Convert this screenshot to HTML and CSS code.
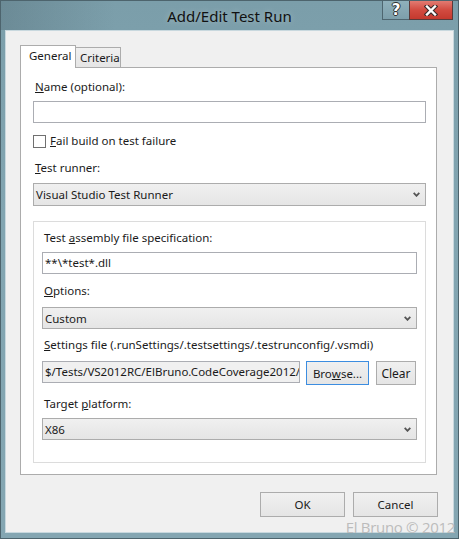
FILE: index.html
```html
<!DOCTYPE html>
<html>
<head>
<meta charset="utf-8">
<link rel="stylesheet" href="styles.css">
</head>
<body>
<div class="window">
  <div class="titlebar">
    <div class="title">Add/Edit Test Run</div>
    <div class="caps">
      <div class="cap help">?</div>
      <div class="cap close">
        <svg width="14" height="11" viewBox="0 0 14 11"><path d="M3 1.5 L11 9.5 M11 1.5 L3 9.5" stroke="#3a2a2a" stroke-width="4.5" stroke-linecap="square"/><path d="M3 1.5 L11 9.5 M11 1.5 L3 9.5" stroke="#ffffff" stroke-width="2.4" stroke-linecap="square"/></svg>
      </div>
    </div>
  </div>
  <div class="client">
    <div class="tabs">
      <div class="tab active">General</div>
      <div class="tab">Criteria</div>
    </div>
    <div class="panel">
      <div class="lbl first"><u>N</u>ame (optional):</div>
      <div class="input name"></div>
      <div class="check-row">
        <span class="checkbox"></span>
        <span class="check-text"><u>F</u>ail build on test failure</span>
      </div>
      <div class="lbl runner"><u>T</u>est runner:</div>
      <div class="select tall">
        <span>Visual Studio Test Runner</span>
        <svg class="chev" width="7" height="5" viewBox="0 0 7 5"><path d="M0.7 0.8 L3.5 3.8 L6.3 0.8" fill="none" stroke="#555" stroke-width="1.8"/></svg>
      </div>
      <div class="group">
        <div class="lbl g1">Test <u>a</u>ssembly file specification:</div>
        <div class="input val">**\*test*.dll</div>
        <div class="lbl g2"><u>O</u>ptions:</div>
        <div class="select">
          <span>Custom</span>
          <svg class="chev" width="7" height="5" viewBox="0 0 7 5"><path d="M0.7 0.8 L3.5 3.8 L6.3 0.8" fill="none" stroke="#555" stroke-width="1.8"/></svg>
        </div>
        <div class="lbl g3"><u>S</u>ettings file (.runSettings/.testsettings/.testrunconfig/.vsmdi)</div>
        <div class="file-row">
          <div class="input readonly">$/Tests/VS2012RC/ElBruno.CodeCoverage2012/</div>
          <div class="btn browse">Bro<u>w</u>se...</div>
          <div class="btn clear">Clear</div>
        </div>
        <div class="lbl g4">Target <u>p</u>latform:</div>
        <div class="select">
          <span>X86</span>
          <svg class="chev" width="7" height="5" viewBox="0 0 7 5"><path d="M0.7 0.8 L3.5 3.8 L6.3 0.8" fill="none" stroke="#555" stroke-width="1.8"/></svg>
        </div>
      </div>
    </div>
    <div class="footer">
      <div class="btn dlg">OK</div>
      <div class="btn dlg">Cancel</div>
    </div>
  </div>
  <div class="watermark">El Bruno © 2012</div>
</div>
</body>
</html>
```
FILE: styles.css
```css
html, body {
  margin: 0;
  padding: 0;
  background: #ffffff;
}
body {
  font-family: "Noto Sans", "Open Sans", sans-serif;
  font-size: 11.5px;
  color: #1a1a1a;
}
u { text-decoration: underline; text-underline-offset: 1px; }

.window {
  position: relative;
  width: 459px;
  height: 539px;
  box-sizing: border-box;
  border: 1px solid #4d646d;
  background: linear-gradient(180deg, #7b9eaa 0%, #82a5b1 40%, #84a6b2 100%);
  display: flex;
  flex-direction: column;
  overflow: hidden;
}
.titlebar {
  height: 29px;
  flex: none;
  display: flex;
  align-items: center;
  justify-content: center;
  background: linear-gradient(90deg, rgba(60,80,90,0.25) 0%, rgba(60,80,90,0) 25%);
}
.title {
  font-size: 15px;
  color: #111;
  line-height: 29px;
  padding-top: 1px;
  text-shadow: 0 0 6px rgba(255,255,255,0.35);
}
.caps {
  position: absolute;
  top: -1px;
  right: 5px;
  display: flex;
}
.cap {
  height: 20px;
  box-sizing: border-box;
  display: flex;
  align-items: center;
  justify-content: center;
}
.help {
  width: 27px;
  border: 1px solid #4e6670;
  border-right: none;
  background: linear-gradient(180deg, #8fb0bb, #7d9fab);
  color: #fff;
  font-weight: bold;
  font-size: 15px;
  font-family: "DejaVu Sans", sans-serif;
  text-shadow: 0 0 1px #222, 1px 0 0 #333, -1px 0 0 #333, 0 1px 0 #333, 0 -1px 0 #333;
}
.close {
  width: 44px;
  border: 1px solid #5a3a3a;
  background: linear-gradient(180deg, #e27b72 0%, #d24b40 50%, #c5392e 100%);
}

.client {
  flex: 1;
  margin: 0 4px 5px 4px;
  background: #f0f0f0;
  border: 1px solid #c8d8de;
  padding: 14px 16px 0 14px;
  display: flex;
  flex-direction: column;
}
.tabs {
  display: flex;
  align-items: flex-end;
  position: relative;
  z-index: 1;
  height: 23px;
}
.tab {
  box-sizing: border-box;
  border: 1px solid #acacac;
  border-bottom: none;
  padding: 0 0 0 4px;
  line-height: 18px;
}
.tab.active {
  height: 23px;
  width: 56px;
  background: #fff;
  padding-left: 8px;
  padding-top: 1px;
}
.tab:not(.active) {
  height: 20px;
  width: 45px;
  margin-bottom: 1px;
  border-left: none;
  background: linear-gradient(180deg, #f0f0f0, #e5e5e5);
  padding-left: 4px;
  padding-top: 1px;
}
.panel {
  margin-top: -1px;
  height: 408px;
  box-sizing: border-box;
  background: #fff;
  border: 1px solid #acacac;
  padding: 11px 10px 11px 12px;
  display: flex;
  flex-direction: column;
}
.lbl {
  line-height: 16px;
  height: 16px;
  padding-left: 2px;
  white-space: nowrap;
}
.input {
  box-sizing: border-box;
  height: 22px;
  border: 1px solid #abadb3;
  background: #fff;
  line-height: 20px;
  padding-left: 2px;
  white-space: nowrap;
  overflow: hidden;
}
.name { margin-top: 6px; }
.check-row {
  margin-top: 10px;
  height: 16px;
  display: flex;
  align-items: center;
}
.checkbox {
  width: 13px;
  height: 13px;
  box-sizing: border-box;
  border: 1px solid #707070;
  background: #fff;
}
.check-text {
  margin-left: 4px;
  line-height: 16px;
}
.runner { margin-top: 11px; }
.select {
  box-sizing: border-box;
  height: 22px;
  border: 1px solid #acacac;
  background: linear-gradient(180deg, #f0f0f0 0%, #e5e5e5 100%);
  display: flex;
  align-items: center;
  justify-content: space-between;
  padding: 0 5px 0 2px;
  margin-top: 6px;
}
.select.tall {
  height: 23px;
  margin-top: 7px;
}
.group {
  margin-top: 15px;
  height: 242px;
  box-sizing: border-box;
  border: 1px solid #dcdcdc;
  padding: 8px 8px 22px 8px;
  display: flex;
  flex-direction: column;
}
.val { margin-top: 6px; }
.g2 { margin-top: 9px; }
.group .select { margin-top: 8px; }
.g3 { margin-top: 8px; }
.g4 { margin-top: 11px; }
.group .g4 + .select { margin-top: 6px; }
.file-row {
  margin-top: 8px;
  display: flex;
  align-items: flex-start;
  height: 24px;
}
.readonly {
  width: 258px;
  background: #f0f0f0;
  flex: none;
}
.btn {
  box-sizing: border-box;
  border: 1px solid #acacac;
  background: linear-gradient(180deg, #f0f0f0 0%, #e5e5e5 100%);
  display: flex;
  align-items: center;
  justify-content: center;
}
.browse {
  margin-left: 6px;
  width: 63px;
  height: 24px;
  border-color: #3c8de0;
}
.clear {
  margin-left: 7px;
  width: 40px;
  height: 24px;
  font-size: 12px;
}
.footer {
  margin-top: 17px;
  margin-right: -1px;
  display: flex;
  justify-content: flex-end;
  gap: 8px;
}
.dlg {
  width: 85px;
  height: 25px;
}
.watermark {
  position: absolute;
  right: 3px;
  bottom: 2px;
  font-family: "Open Sans", "Noto Sans", sans-serif;
  font-size: 15px;
  line-height: 18px;
  color: #bcbcbc;
  letter-spacing: -0.3px;
}
```
